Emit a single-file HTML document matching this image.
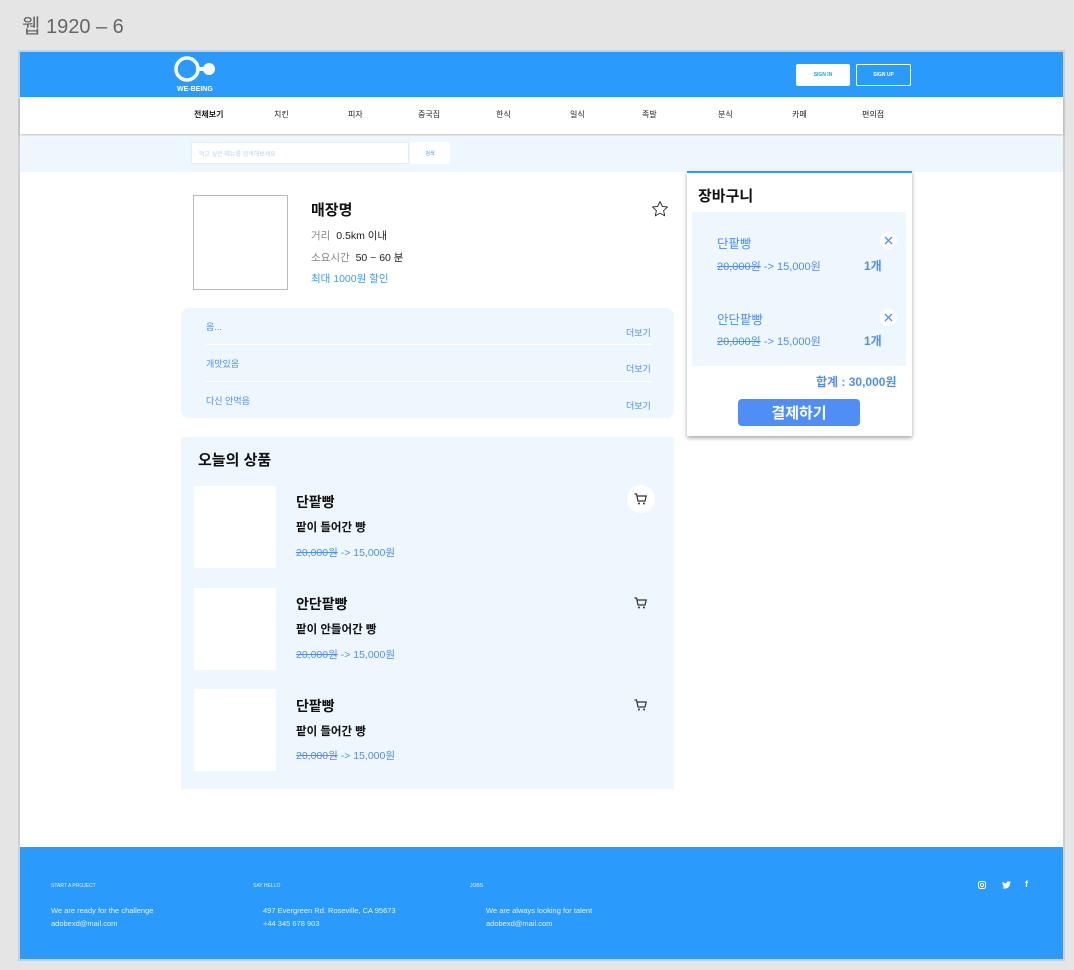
<!DOCTYPE html>
<html><head><meta charset="utf-8"><style>
*{margin:0;padding:0;box-sizing:border-box}
body{width:1074px;height:970px;background:#e5e5e5;font-family:"Liberation Sans","Noto Sans CJK KR",sans-serif;position:relative;overflow:hidden}
.a{position:absolute}
.title{left:22px;top:10px;font-size:20px;color:#666}
.board{left:18px;top:50px;width:1047px;height:911px;background:#fff;border:2px solid #d0d0d0}
.blue{color:#4f8ef5}
.strike{text-decoration:line-through}
.btn{display:flex;align-items:center;justify-content:center}
</style></head><body>
<div class="a title">웹 1920 – 6</div>
<div class="a board"></div>
<div class="a" style="left:20px;top:52px;width:1043px;height:45px;background:#2a9afc"></div>
<svg class="a" style="left:172px;top:56px" width="46" height="26" viewBox="0 0 46 26"><circle cx="15" cy="13" r="11" fill="none" stroke="#fff" stroke-width="3.5"/><rect x="24" y="11" width="10" height="4" fill="#fff"/><circle cx="37" cy="13" r="6" fill="#fff"/></svg>
<div class="a" style="left:177px;top:86px;font-size:7px;color:#fff;font-weight:bold">WE-BEING</div>
<div class="a btn" style="left:796px;top:64px;width:54px;height:22px;background:#fff;border-radius:2px;font-size:5px;color:#2a9afc;font-weight:bold">SIGN IN</div>
<div class="a btn" style="left:856px;top:64px;width:55px;height:22px;border:1.5px solid #fff;border-radius:2px;font-size:5px;color:#fff;font-weight:bold">SIGN UP</div>
<div class="a" style="left:20px;top:97px;width:1043px;height:37px;background:#fff;box-shadow:0 2px 3px rgba(0,0,0,.2)"></div>
<div class="a" style="left:0;top:109px;font-size:8px;color:#222;width:1074px;height:12px">
<span class="a" style="left:194px;font-weight:bold">전체보기</span><span class="a" style="left:274px">치킨</span><span class="a" style="left:348px">피자</span><span class="a" style="left:418px">중국집</span><span class="a" style="left:496px">한식</span><span class="a" style="left:570px">일식</span><span class="a" style="left:642px">족발</span><span class="a" style="left:718px">분식</span><span class="a" style="left:792px">카페</span><span class="a" style="left:862px">편의점</span></div>
<div class="a" style="left:20px;top:136px;width:1043px;height:36px;background:#eef6fe"></div>
<div class="a" style="left:191px;top:142px;width:218px;height:22px;background:#fff;border:1px solid #dfeefc;font-size:6px;color:#b9d3ee;padding:6px 7px">먹고 싶은 메뉴를 검색해보세요</div>
<div class="a btn" style="left:410px;top:142px;width:40px;height:22px;background:#fff;font-size:5px;color:#4f8ef5">검색</div>
<div class="a" style="left:193px;top:195px;width:95px;height:95px;border:1px solid #bbb"></div>
<div class="a" style="left:311px;top:199px;font-size:15px;font-weight:bold;color:#111">매장명</div>
<div class="a" style="left:311px;top:228px;font-size:10.5px;color:#888">거리 <span style="color:#222;margin-left:3px">0.5km 이내</span></div>
<div class="a" style="left:311px;top:250px;font-size:10.5px;color:#888">소요시간 <span style="color:#222;margin-left:3px">50 ~ 60 분</span></div>
<div class="a" style="left:311px;top:271px;font-size:10.5px;color:#3aa0fc">최대 1000원 할인</div>
<svg class="a" style="left:651px;top:200px" width="18" height="18" viewBox="0 0 24 24"><path d="M12 2l3 6.5 7 .8-5.2 4.8 1.5 7-6.3-3.6-6.3 3.6 1.5-7L2 9.3l7-.8z" fill="none" stroke="#333" stroke-width="1.3" stroke-linejoin="round"/></svg>
<div class="a" style="left:181px;top:308px;width:493px;height:110px;background:#eef6fe;border-radius:8px"></div>
<div class="a" style="left:206px;top:344px;width:447px;height:1px;background:#fff"></div>
<div class="a" style="left:206px;top:381px;width:447px;height:1px;background:#fff"></div>
<div class="a blue" style="left:206px;top:320px;font-size:9px">음...</div>
<div class="a blue" style="left:206px;top:357px;font-size:9px">개맛있음</div>
<div class="a blue" style="left:206px;top:394px;font-size:9px">다신 안먹음</div>
<div class="a blue" style="left:626px;top:326px;font-size:9px">더보기</div>
<div class="a blue" style="left:626px;top:362px;font-size:9px">더보기</div>
<div class="a blue" style="left:626px;top:399px;font-size:9px">더보기</div>
<div class="a" style="left:181px;top:437px;width:493px;height:352px;background:#eef6fe"></div>
<div class="a" style="left:198px;top:449px;font-size:15px;font-weight:bold;color:#111">오늘의 상품</div>
<div class="a" style="left:194px;top:486px;width:82px;height:82px;background:#fff"></div>
<div class="a" style="left:194px;top:588px;width:82px;height:82px;background:#fff"></div>
<div class="a" style="left:194px;top:689px;width:82px;height:82px;background:#fff"></div>
<div class="a" style="left:296px;top:492px;font-size:14px;font-weight:bold;color:#111">단팥빵</div>
<div class="a" style="left:296px;top:519px;font-size:11.5px;font-weight:bold;color:#111">팥이 들어간 빵</div>
<div class="a blue" style="left:296px;top:545px;font-size:10.5px"><span class="strike">20,000원</span> -&gt; 15,000원</div>
<div class="a" style="left:296px;top:594px;font-size:14px;font-weight:bold;color:#111">안단팥빵</div>
<div class="a" style="left:296px;top:621px;font-size:11.5px;font-weight:bold;color:#111">팥이 안들어간 빵</div>
<div class="a blue" style="left:296px;top:647px;font-size:10.5px"><span class="strike">20,000원</span> -&gt; 15,000원</div>
<div class="a" style="left:296px;top:696px;font-size:14px;font-weight:bold;color:#111">단팥빵</div>
<div class="a" style="left:296px;top:723px;font-size:11.5px;font-weight:bold;color:#111">팥이 들어간 빵</div>
<div class="a blue" style="left:296px;top:748px;font-size:10.5px"><span class="strike">20,000원</span> -&gt; 15,000원</div>
<div class="a" style="left:627px;top:485px;width:28px;height:28px;border-radius:50%;background:#fff"></div>
<svg class="a" style="left:634px;top:493px" width="13" height="12" viewBox="0 0 13 12"><path d="M0.5 1h2l1.5 7h7l1.2-5H3" fill="none" stroke="#333" stroke-width="1.2"/><circle cx="5" cy="10.5" r="1" fill="#333"/><circle cx="10" cy="10.5" r="1" fill="#333"/></svg>
<svg class="a" style="left:634px;top:597px" width="13" height="12" viewBox="0 0 13 12"><path d="M0.5 1h2l1.5 7h7l1.2-5H3" fill="none" stroke="#333" stroke-width="1.2"/><circle cx="5" cy="10.5" r="1" fill="#333"/><circle cx="10" cy="10.5" r="1" fill="#333"/></svg>
<svg class="a" style="left:634px;top:699px" width="13" height="12" viewBox="0 0 13 12"><path d="M0.5 1h2l1.5 7h7l1.2-5H3" fill="none" stroke="#333" stroke-width="1.2"/><circle cx="5" cy="10.5" r="1" fill="#333"/><circle cx="10" cy="10.5" r="1" fill="#333"/></svg>
<div class="a" style="left:687px;top:171px;width:225px;height:265px;background:#fff;border-top:2px solid #2a9afc;box-shadow:0 2px 4px rgba(0,0,0,.35)"></div>
<div class="a" style="left:698px;top:185px;font-size:15px;font-weight:bold;color:#111">장바구니</div>
<div class="a" style="left:692px;top:212px;width:214px;height:154px;background:#eef6fe"></div>
<div class="a blue" style="left:717px;top:233px;font-size:12.5px">단팥빵</div>
<div class="a blue" style="left:717px;top:258px;font-size:11px"><span class="strike">20,000원</span> -&gt; 15,000원</div>
<div class="a blue" style="left:864px;top:257px;font-size:12px;font-weight:bold">1개</div>
<div class="a blue" style="left:717px;top:309px;font-size:12.5px">안단팥빵</div>
<div class="a blue" style="left:717px;top:333px;font-size:11px"><span class="strike">20,000원</span> -&gt; 15,000원</div>
<div class="a blue" style="left:864px;top:332px;font-size:12px;font-weight:bold">1개</div>
<svg class="a" style="left:880px;top:232px" width="17" height="17" viewBox="0 0 17 17"><circle cx="8.5" cy="8.5" r="8.5" fill="#fff"/><path d="M5 5l7 7M12 5l-7 7" stroke="#4f8ef5" stroke-width="1.3"/></svg>
<svg class="a" style="left:880px;top:309px" width="17" height="17" viewBox="0 0 17 17"><circle cx="8.5" cy="8.5" r="8.5" fill="#fff"/><path d="M5 5l7 7M12 5l-7 7" stroke="#4f8ef5" stroke-width="1.3"/></svg>
<div class="a blue" style="left:816px;top:373px;font-size:12px;font-weight:bold">합계 : 30,000원</div>
<div class="a btn" style="left:738px;top:399px;width:122px;height:27px;background:#4f8ef5;border-radius:4px;color:#fff;font-size:15px;font-weight:bold">결제하기</div>
<div class="a" style="left:20px;top:847px;width:1043px;height:112px;background:#2a9afc"></div>
<div class="a" style="left:51px;top:883px;font-size:5px;color:#e6f2ff">START A PROJECT</div>
<div class="a" style="left:253px;top:883px;font-size:5px;color:#e6f2ff">SAY HELLO</div>
<div class="a" style="left:470px;top:883px;font-size:5px;color:#e6f2ff">JOBS</div>
<div class="a" style="left:51px;top:904px;font-size:7.5px;color:#e6f2ff;line-height:13px">We are ready for the challenge<br>adobexd@mail.com</div>
<div class="a" style="left:263px;top:904px;font-size:7.5px;color:#e6f2ff;line-height:13px">497 Evergreen Rd. Roseville, CA 95673<br>+44 345 678 903</div>
<div class="a" style="left:486px;top:904px;font-size:7.5px;color:#e6f2ff;line-height:13px">We are always looking for talent<br>adobexd@mail.com</div>
<svg class="a" style="left:978px;top:881px" width="8" height="8" viewBox="0 0 8 8"><rect x=".5" y=".5" width="7" height="7" rx="2" fill="none" stroke="#fff"/><circle cx="4" cy="4" r="1.6" fill="none" stroke="#fff"/></svg>
<svg class="a" style="left:1002px;top:881px" width="9" height="8" viewBox="0 0 24 20"><path d="M24 2.4a10 10 0 0 1-2.8.8A5 5 0 0 0 23.3.5a10 10 0 0 1-3.1 1.2A4.9 4.9 0 0 0 11.8 6 14 14 0 0 1 1.7.9a4.9 4.9 0 0 0 1.5 6.6A4.9 4.9 0 0 1 1 6.9 4.9 4.9 0 0 0 4.9 11.8a5 5 0 0 1-2.2.1 4.9 4.9 0 0 0 4.6 3.4A9.9 9.9 0 0 1 0 17.3 14 14 0 0 0 7.5 19.5c9 0 14-7.5 14-14v-.6A10 10 0 0 0 24 2.4z" fill="#fff"/></svg>
<div class="a" style="left:1025px;top:879px;font-size:9px;color:#fff;font-weight:bold">f</div>
</body></html>
